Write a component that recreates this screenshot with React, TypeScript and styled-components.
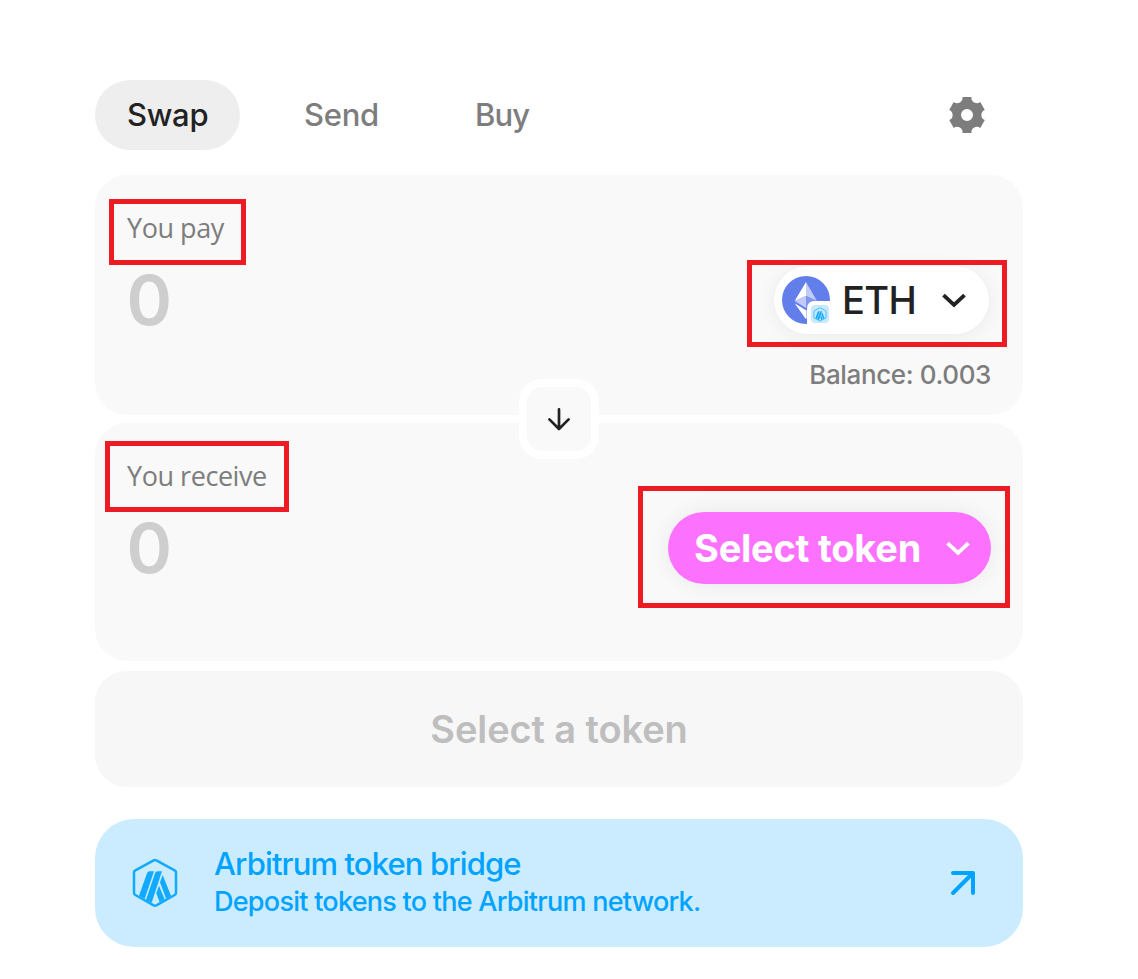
import React from "react";
import styled, { createGlobalStyle } from "styled-components";

const GlobalStyle = createGlobalStyle`
  * { box-sizing: border-box; }
  body { margin: 0; background: #fff; font-family: Inter, "Liberation Sans", sans-serif; }
  button { font-family: inherit; border: 0; padding: 0; margin: 0; cursor: pointer; }
  svg { display: block; flex: none; }
`;

const Page = styled.main`
  width: 1138px;
  height: 979px;
  padding: 80px 115px 0 95px;
  overflow: hidden;
`;

const Header = styled.header`
  display: flex;
  align-items: center;
  height: 70px;
  margin-bottom: 25px;
  padding-right: 37px;
`;

const Tabs = styled.nav`
  display: flex;
  gap: 32px;
  flex: 1;
`;

const Tab = styled.button<{ $active?: boolean; $width: number; $spacing: number }>`
  width: ${(p) => p.$width}px;
  height: 70px;
  padding: 0 0 1px 32px;
  text-align: left;
  white-space: nowrap;
  border-radius: 35px;
  background: ${(p) => (p.$active ? "#eeeeee" : "transparent")};
  color: ${(p) => (p.$active ? "#222222" : "#7d7d7d")};
  font-size: 31px;
  font-weight: 470;
  letter-spacing: ${(p) => p.$spacing}px;
`;

const IconButton = styled.button`
  background: none;
`;

const Panels = styled.div`
  display: flex;
  flex-direction: column;
  gap: 8px;
  position: relative;
`;

const Panel = styled.section<{ $height: number }>`
  position: relative;
  height: ${(p) => p.$height}px;
  padding: 33px 32px 0;
  border-radius: 32px;
  background: #f9f9f9;
`;

const PanelLabel = styled.div<{ $spacing: number }>`
  height: 40px;
  line-height: 40px;
  color: #7d7d7d;
  font-family: "Open Sans", "Noto Sans", sans-serif;
  font-size: 27px;
  letter-spacing: ${(p) => p.$spacing}px;
`;

const AmountRow = styled.div`
  display: flex;
  justify-content: space-between;
  align-items: center;
  height: 72px;
  margin-top: 16px;
`;

const Amount = styled.span`
  color: #cecece;
  font-size: 69px;
  font-weight: 560;
  line-height: 72px;
  letter-spacing: -1px;
  margin-left: -0.5px;
`;

const TokenPill = styled.button`
  display: flex;
  align-items: center;
  width: 215px;
  height: 68px;
  margin-right: 2px;
  padding-left: 8px;
  border-radius: 34px;
  background: #fff;
  box-shadow: 0 0 0 1px #f1f1f1, 0 2px 20px rgba(34, 34, 34, 0.06);
`;

const TokenIcon = styled.span`
  position: relative;
  width: 48px;
  height: 48px;
  margin-right: 12px;
`;

const ChainBadge = styled.span`
  position: absolute;
  left: 25px;
  top: 25px;
  width: 26px;
  height: 26px;
  display: grid;
  place-items: center;
  border-radius: 7px 3px 3px 3px;
  background: #fff;
`;

const ChainTile = styled.span`
  display: grid;
  place-items: center;
  width: 18px;
  height: 18px;
  border-radius: 4px;
  background: #c8e9fc;
`;

const Symbol = styled.span`
  width: 98.5px;
  text-align: left;
  color: #222;
  font-size: 38px;
  font-weight: 550;
  letter-spacing: -0.6px;
`;

const SelectPill = styled.button`
  display: flex;
  align-items: center;
  justify-content: space-between;
  width: 323px;
  height: 72px;
  padding: 0 20.5px 0 26px;
  border-radius: 36px;
  background: #fc72ff;
  color: #fff;
  font-size: 38px;
  font-weight: 670;
  letter-spacing: -0.25px;
  white-space: nowrap;
  box-shadow: 0 0 22px rgba(34, 34, 34, 0.07);
`;

const Balance = styled.div`
  margin-top: 21px;
  text-align: right;
  color: #7d7d7d;
  font-size: 26px;
  line-height: 36px;
  font-weight: 460;
  letter-spacing: -0.38px;
`;

const SwitchButton = styled.button`
  position: absolute;
  z-index: 1;
  left: 424px;
  top: 204px;
  width: 80px;
  height: 80px;
  display: grid;
  place-items: center;
  border: 8px solid #fff;
  border-radius: 23px;
  background: #f9f9f9;
`;

const Highlight = styled.span<{ $x: number; $y: number; $w: number; $h: number }>`
  position: absolute;
  left: ${(p) => p.$x}px;
  top: ${(p) => p.$y}px;
  width: ${(p) => p.$w}px;
  height: ${(p) => p.$h}px;
  border: 5px solid #ed1c24;
  pointer-events: none;
`;

const Submit = styled.button`
  display: block;
  width: 100%;
  height: 116px;
  margin-top: 10px;
  border-radius: 32px;
  background: #f7f7f7;
  color: #bebebe;
  font-size: 38px;
  font-weight: 600;
  letter-spacing: -0.1px;
`;

const Bridge = styled.a`
  display: flex;
  align-items: center;
  height: 128px;
  margin-top: 32px;
  padding: 0 47px 0 36px;
  border-radius: 39px;
  background: #cbecff;
  color: #00a3ff;
`;

const BridgeText = styled.div`
  flex: 1;
  margin: 0 0 0 35px;
  font-weight: 480;
`;

const BridgeTitle = styled.div`
  font-size: 31px;
  line-height: 38px;
  letter-spacing: -0.88px;
`;

const BridgeDetail = styled.div`
  font-size: 27px;
  line-height: 38px;
  letter-spacing: -0.74px;
`;

const GearIcon = () => (
  <svg width="38" height="38" viewBox="-19 -19 38 38">
    <path
      fill="#7d7d7d"
      fillRule="evenodd"
      d="M-4.5-18H4.5A5.5 5.5 0 0 0 13.3-12.9L17.8-5.1A5.5 5.5 0 0 0 17.8 5.1L13.3 12.9A5.5 5.5 0 0 0 4.5 18H-4.5A5.5 5.5 0 0 0-13.3 12.9L-17.8 5.1A5.5 5.5 0 0 0-17.8-5.1L-13.3-12.9A5.5 5.5 0 0 0-4.5-18ZM0-6A6 6 0 1 0 0 6A6 6 0 1 0 0-6Z"
    />
  </svg>
);

const Chevron = ({ color }: { color: string }) => (
  <svg width="26" height="16" viewBox="0 0 26 16" fill="none" stroke={color} strokeWidth="3.8">
    <path d="M2.5 3.2L13 13L23.5 3.2" />
  </svg>
);

const EthIcon = () => (
  <svg width="48" height="48" viewBox="126 78 144 144">
    <circle cx="198" cy="150" r="72" fill="#627eea" />
    <path fill="#fff" d="M198 96V138L164 153Z" />
    <path fill="#c0cbf7" d="M198 96V138L231 153ZM164 153L198 138V174Z" />
    <path fill="#8197ee" d="M198 138L231 153L198 174Z" />
    <path fill="#fff" d="M164 160L198 181V208Z" />
    <path fill="#c0cbf7" d="M231 160L198 181V208Z" />
  </svg>
);

const ArbitrumIcon = ({ width, height }: { width: number; height: number }) => (
  <svg width={width} height={height} viewBox="122 142 144 156" fill="#12aaff">
    <path
      fill="none"
      stroke="#12aaff"
      strokeWidth="7.5"
      strokeLinejoin="round"
      d="M190 152Q194 150 198 152L253 182Q257 184 257 188V250Q257 254 253 256L198 287Q194 289 190 287L135 256Q131 254 131 250V188Q131 184 135 182Z"
    />
    <path d="M178 185H191L163 268L146 258L170 191Q172 185 178 185Z" />
    <path d="M202 185H215L184 279L167 270L194 191Q196 185 202 185Z" />
    <path d="M217 196L242 258L227 267L209 218Z" />
    <path d="M206 228L223 269L208 278L198 251Z" />
  </svg>
);

export default function App() {
  return (
    <>
      <GlobalStyle />
      <Page>
        <Header>
          <Tabs>
            <Tab $active $width={145} $spacing={-0.3}>Swap</Tab>
            <Tab $width={139} $spacing={-0.3}>Send</Tab>
            <Tab $width={118} $spacing={-0.9}>Buy</Tab>
          </Tabs>
          <IconButton aria-label="Settings"><GearIcon /></IconButton>
        </Header>
        <Panels>
          <Panel $height={240}>
            <PanelLabel $spacing={-0.45}>You pay</PanelLabel>
            <AmountRow>
              <Amount>0</Amount>
              <TokenPill>
                <TokenIcon>
                  <EthIcon />
                  <ChainBadge>
                    <ChainTile><ArbitrumIcon width={14} height={15} /></ChainTile>
                  </ChainBadge>
                </TokenIcon>
                <Symbol>ETH</Symbol>
                <Chevron color="#222222" />
              </TokenPill>
            </AmountRow>
            <Balance>Balance: 0.003</Balance>
            <Highlight $x={14} $y={24} $w={137} $h={66} />
            <Highlight $x={652} $y={85} $w={260} $h={87} />
          </Panel>
          <Panel $height={238}>
            <PanelLabel $spacing={-0.45}>You receive</PanelLabel>
            <AmountRow>
              <Amount>0</Amount>
              <SelectPill>
                Select token
                <Chevron color="#ffffff" />
              </SelectPill>
            </AmountRow>
            <Highlight $x={10} $y={18} $w={184} $h={71} />
            <Highlight $x={543} $y={63} $w={372} $h={122} />
          </Panel>
          <SwitchButton aria-label="Switch tokens">
            <svg width="24" height="24" viewBox="0 0 24 24" fill="none" stroke="#222" strokeWidth="2.7" strokeLinecap="round" strokeLinejoin="round">
              <path d="M12 2.4V22M2.4 12.4L12 22L21.6 12.4" />
            </svg>
          </SwitchButton>
        </Panels>
        <Submit>Select a token</Submit>
        <Bridge>
          <ArbitrumIcon width={48} height={52} />
          <BridgeText>
            <BridgeTitle>Arbitrum token bridge</BridgeTitle>
            <BridgeDetail>Deposit tokens to the Arbitrum network.</BridgeDetail>
          </BridgeText>
          <svg width="26" height="26" viewBox="0 0 26 26" fill="none" stroke="#00a3ff" strokeWidth="4" strokeLinecap="round" strokeLinejoin="round">
            <path d="M3 3H23V23M23 3L3 23" />
          </svg>
        </Bridge>
      </Page>
    </>
  );
}
